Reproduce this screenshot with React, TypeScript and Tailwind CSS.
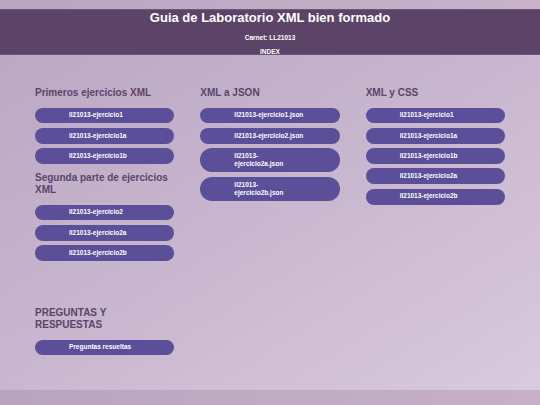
import React from 'react';

type Link = { label: string };

const SECTIONS: { title: string; links: Link[] }[][] = [
  [
    {
      title: 'Primeros ejercicios XML',
      links: [{ label: 'll21013-ejercicio1' }, { label: 'll21013-ejercicio1a' }, { label: 'll21013-ejercicio1b' }],
    },
    {
      title: 'Segunda parte de ejercicios XML',
      links: [{ label: 'll21013-ejercicio2' }, { label: 'll21013-ejercicio2a' }, { label: 'll21013-ejercicio2b' }],
    },
  ],
  [
    {
      title: 'XML a JSON',
      links: [
        { label: 'll21013-ejercicio1.json' },
        { label: 'll21013-ejercicio2.json' },
        { label: 'll21013-ejercicio2a.json' },
        { label: 'll21013-ejercicio2b.json' },
      ],
    },
  ],
  [
    {
      title: 'XML y CSS',
      links: [
        { label: 'll21013-ejercicio1' },
        { label: 'll21013-ejercicio1a' },
        { label: 'll21013-ejercicio1b' },
        { label: 'll21013-ejercicio2a' },
        { label: 'll21013-ejercicio2b' },
      ],
    },
  ],
];

function LinkButton({ label }: Link) {
  return (
    <a
      href="#"
      className="block rounded-full bg-[#5a4f98] px-[34px] py-[3.75px] text-left text-[6.5px] leading-[8.4px] font-bold text-white"
    >
      {label}
    </a>
  );
}

function Section({ title, links, first }: { title: string; links: Link[]; first?: boolean }) {
  return (
    <div className={first ? '' : 'mt-[8px]'}>
      <h2 className="mb-[8.5px] text-[10px] leading-[12px] font-bold text-[#5c4468]">{title}</h2>
      <div className="flex flex-col gap-[4.4px]">
        {links.map((l, i) => (
          <LinkButton key={i} label={l.label} />
        ))}
      </div>
    </div>
  );
}

export default function App() {
  return (
    <div
      className="flex h-[405px] flex-col overflow-hidden bg-gradient-to-r from-[#b9a5c1] to-[#c8b3cb]"
      style={{ fontFamily: '"Liberation Sans", Arial, sans-serif' }}
    >
      <div className="h-[9px]" />

      {/* Header */}
      <header className="flex h-[46px] flex-col items-center border-y border-[#6e5579] bg-[#5c4468] text-white">
        <h1 className="text-[13px] leading-[15px] font-bold">Guia de Laboratorio XML bien formado</h1>
        <p className="mt-[9px] text-[6.5px] leading-[8px] font-bold">Carnet: LL21013</p>
        <p className="mt-[6px] text-[6.5px] leading-[8px] font-bold">INDEX</p>
      </header>

      {/* Main */}
      <main className="flex-1 bg-gradient-to-br from-[#bba8c4] via-[#c9b7cf] to-[#dacadd] px-[35px] pt-[32px]">
        <div className="grid grid-cols-3 gap-x-[26px] gap-y-[46px]">
          {SECTIONS.map((col, ci) => (
            <div key={ci}>
              {col.map((s, si) => (
                <Section key={si} title={s.title} links={s.links} first={si === 0} />
              ))}
            </div>
          ))}
          <div>
            <Section title="PREGUNTAS Y RESPUESTAS" links={[{ label: 'Preguntas resueltas' }]} first />
          </div>
        </div>
      </main>

      <footer className="h-[15px] bg-gradient-to-r from-[#b9a3bf] to-[#c7b1c9]" />
    </div>
  );
}
